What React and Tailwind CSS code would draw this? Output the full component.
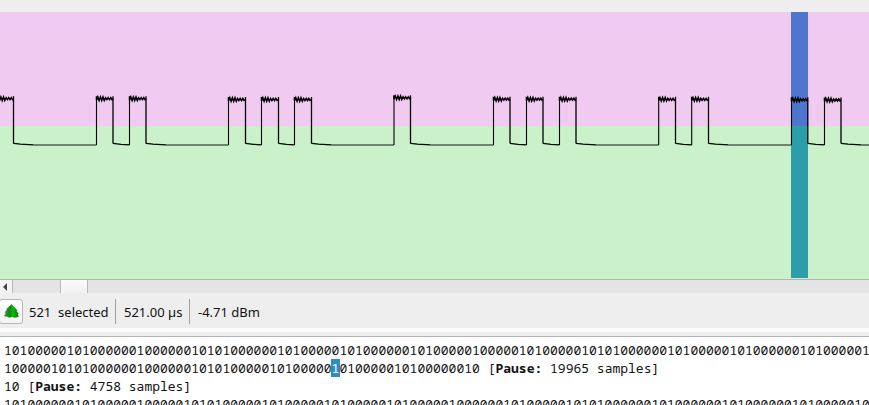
import React from "react";

// Each number is the distance from one set bit to the next.
const bits = (gaps) => gaps.map((n) => "1" + "0".repeat(n - 1)).join("");

const LINE_1 = bits([2, 6, 2, 7, 7, 2, 2, 7, 2, 6, 2, 7, 2, 6, 6, 2, 6, 2, 2, 7, 2, 6, 2, 7, 2, 6, 1]);
const LINE_2A = bits([6, 2, 2, 7, 7, 2, 2, 6, 2, 6]);
const LINE_2B = "0" + bits([6, 2, 7, 2]);
const LINE_4 = bits([2, 7, 2, 6, 6, 2, 2, 6, 2, 6, 2, 6, 2, 6, 7, 2, 6, 2, 2, 7, 2, 7, 2, 7, 2, 6, 2]);

// [rising edge, falling edge, top, settles with a long tail]
const PULSES = [
  [-3, 13.5, 98.7, true], [96.5, 113, 98.7, false], [129.5, 146, 98.7, true],
  [228.5, 245.5, 99.5, false], [261.5, 278.5, 99.5, false], [294.5, 311.5, 99.5, true],
  [394, 410.5, 97.8, true], [493.5, 510, 99.2, false], [526.5, 543, 99.2, false],
  [559.5, 576, 99.2, true], [658.7, 675.5, 99.3, false], [691.7, 708.5, 99.3, true],
  [791.5, 807.8, 99.8, false], [824.5, 841, 100, true],
];

function Signal() {
  return (
    <svg className="block h-full w-full" viewBox="0 12 869 267" fill="none" stroke="#000">
      <rect x="791" y="12" width="17" height="114" fill="#4e76cf" stroke="none" />
      <rect x="791" y="126" width="17" height="152" fill="#2b9ea9" stroke="none" />
      {PULSES.map(([a, b, y, tail], i) => {
        const next = i + 1 < PULSES.length ? PULSES[i + 1][0] : 869;
        let top = `M${a} ${y - 2.5}V${y + 1.5}`;
        for (let k = 1; k <= 6; k++) {
          const amp = k < 4 ? 1.8 : 1;
          top += `L${a + k * 2.6 - 1.3} ${y - amp}L${a + k * 2.6} ${y + amp}`;
        }
        top += `L${b} ${y}`;
        return (
          <g key={i}>
            <path d={`M${a} 145V${y - 2}`} strokeWidth="1.1" />
            <path d={top} strokeWidth="1.5" />
            <path d={`M${b} ${y - 2.5}V143.5`} strokeWidth="1.3" />
            <path d={tail ? `M${b} 143.3L${b + 7} 144.2L${b + 20} 144.8` : `M${b} 143.3L${b + 8} 144.3L${next} 144.8`} strokeWidth="1.2" />
            {tail && <path d={`M${b + 20} 145H${next}`} strokeWidth="1.6" strokeOpacity=".6" />}
          </g>
        );
      })}
    </svg>
  );
}

function Tree() {
  return (
    <svg className="mb-px h-[14px] w-[15px]" viewBox="0 0 15 14">
      <defs>
        <linearGradient id="leaf" x1="0" y1="0" x2="1" y2="0">
          <stop offset="0" stopColor="#4f8f4f" />
          <stop offset=".4" stopColor="#168316" />
          <stop offset=".6" stopColor="#00c400" />
          <stop offset="1" stopColor="#076a07" />
        </linearGradient>
      </defs>
      <path d="M7.5 .6L2.6 5L3.3 5.4L.9 8.4L2.2 8.8L.3 12L3.4 12.4L5 13.4L8 12.8L11 13.4L14.6 12.6L13.4 10.6L14.4 10L12.4 7.2L13.2 6.4Z" fill="url(#leaf)" stroke="#176b17" strokeWidth=".4" />
    </svg>
  );
}

export default function App() {
  return (
    <div className="flex h-[405px] w-[869px] flex-col overflow-hidden bg-[#eeeeee] pt-3 font-['Noto_Sans',sans-serif] text-[13px] text-[#111]">
      <div className="h-[267px] shrink-0 bg-[linear-gradient(#f1caf2_114px,#caf1ca_114px)]">
        <Signal />
      </div>
      <div className="flex h-[14px] shrink-0 border-t border-[#b4b4b4] bg-[#e4e4e4]">
        <div className="flex w-[13px] items-center border-r border-[#b9b9b9] bg-[#f4f4f4] pl-[3px]">
          <svg className="h-2 w-1" viewBox="0 0 4 8"><path d="M4 0V8L0 4Z" fill="#444" /></svg>
        </div>
        <div className="ml-[47px] w-7 border-x border-[#b9b9b9] bg-gradient-to-b from-[#fbfbfb] to-[#f1f1f1]" />
      </div>
      <div className="flex h-[35px] shrink-0 items-end">
        <div className="-ml-px mb-[4px] flex h-[25px] w-6 items-center justify-center rounded-[3px] border border-[#b6b6b6] bg-gradient-to-b from-white to-[#f3f3f3]">
          <Tree />
        </div>
        <div className="mb-[4px] flex h-[25px] items-center">
          <span className="ml-[6px] w-[86px] whitespace-pre pt-0.5">521  selected</span>
          <span className="h-[25px] w-px bg-[#a0a0a0]" />
          <span className="ml-2 w-[65px] whitespace-nowrap pt-0.5">521.00 µs</span>
          <span className="h-[25px] w-px bg-[#a0a0a0]" />
          <span className="ml-2 whitespace-nowrap pt-0.5">-4.71 dBm</span>
        </div>
      </div>
      <div className="h-1 shrink-0 bg-[#fcfcfc]" />
      <div className="h-1 shrink-0" />
      <div className="h-[69px] shrink-0 overflow-hidden whitespace-pre border-t border-[#b4b4b4] bg-white pl-[4px] pt-[4px] font-['Noto_Sans_Mono','DejaVu_Sans_Mono',monospace] text-[13px] leading-[18px]">
        <div>{LINE_1}</div>
        <div className="flex">
          <span>{LINE_2A}</span>
          <span className="-ml-[0.6px] h-[18px] bg-[#308cc6] px-[0.6px] text-white">1</span>
          <span className="-ml-[0.6px]">{LINE_2B} [<b>Pause:</b> 19965 samples]</span>
        </div>
        <div>10 [<b>Pause:</b> 4758 samples]</div>
        <div>{LINE_4}</div>
      </div>
    </div>
  );
}
